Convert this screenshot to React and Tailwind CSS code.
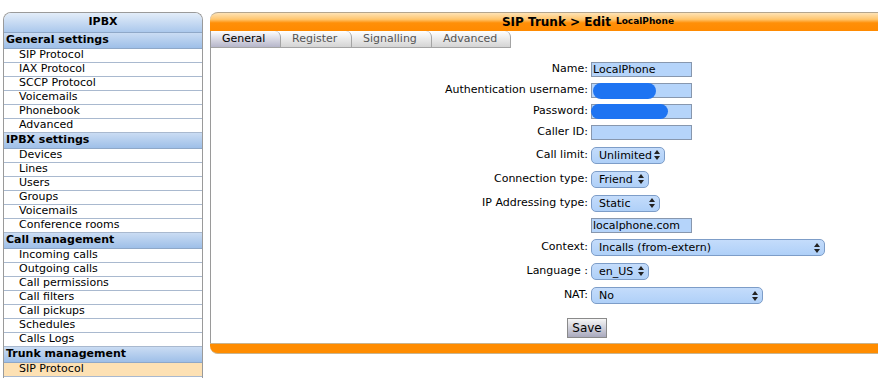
import React from 'react';

const MENU = [
  { title: 'General settings', items: ['SIP Protocol', 'IAX Protocol', 'SCCP Protocol', 'Voicemails', 'Phonebook', 'Advanced'] },
  { title: 'IPBX settings', items: ['Devices', 'Lines', 'Users', 'Groups', 'Voicemails', 'Conference rooms'] },
  { title: 'Call management', items: ['Incoming calls', 'Outgoing calls', 'Call permissions', 'Call filters', 'Call pickups', 'Schedules', 'Calls Logs'] },
  { title: 'Trunk management', items: ['SIP Protocol', ''], active: 0 },
];

const TABS = [
  { label: 'General', w: 'w-[70px]', on: true },
  { label: 'Register', w: 'w-[71px]' },
  { label: 'Signalling', w: 'w-[80px]' },
  { label: 'Advanced', w: 'w-[79px]' },
];

function Arrows() {
  return (
    <svg width="6" height="10" viewBox="0 0 6 10" className="shrink-0">
      <polygon points="0,4 3,0 6,4" fill="#222" />
      <polygon points="0,6 3,10 6,6" fill="#222" />
    </svg>
  );
}

function Sel({ w, v }) {
  return (
    <div className={`flex h-[17px] items-center justify-between rounded-[5px] border border-[#7d9dc8] bg-[linear-gradient(to_bottom,#c4dcfb,#afd0f8)] pl-[7px] pr-[4px] leading-none ${w}`}>
      <span>{v}</span>
      <Arrows />
    </div>
  );
}

function Txt({ v, children }) {
  return (
    <div className="relative h-[15px] w-[101px] border border-[#8797ae] bg-[#b5d4fa] pl-[1px] leading-[13px]">
      {v}
      {children}
    </div>
  );
}

function Row({ label, h, children }) {
  return (
    <div className={`flex items-center ${h}`}>
      <div className="w-[380px] pr-[3px] text-right">{label}</div>
      {children}
    </div>
  );
}

export default function App() {
  return (
    <div className="flex h-[378px] w-[878px] overflow-hidden bg-white pt-[12px] font-['DejaVu_Sans','Verdana',sans-serif] text-[11px] text-black">

      {/* SIDEBAR */}
      <div className="ml-[3px] w-[200px] shrink-0 rounded-t-[8px] border-x border-t border-[#9a9a9a]">
        <div className="flex h-[20px] items-center justify-center rounded-t-[7px] border-b border-[#8fa8c8] bg-[linear-gradient(to_bottom,#e3edf9,#abc8ec)] font-bold">
          IPBX
        </div>
        {MENU.map((sec, i) => (
          <div key={i}>
            <div className="flex h-[16px] items-center border-b border-[#8fa8c8] bg-[linear-gradient(to_bottom,#cadcf3,#9ebfe8)] pl-[2px] font-bold">
              {sec.title}
            </div>
            {sec.items.map((it, j) => (
              <div key={j}
                className={`flex h-[14px] items-center border-b border-[#a9b9cf] pl-[15px] ${sec.active === j ? 'bg-[#fde1b4]' : 'bg-white'}`}>
                {it}
              </div>
            ))}
          </div>
        ))}
      </div>

      {/* MAIN */}
      <div className="ml-[7px] flex w-[700px] shrink-0 flex-col">
        <div className="flex h-[19px] items-center justify-center gap-[5px] rounded-tl-[8px] border-t border-[#b3a58e] bg-[linear-gradient(to_bottom,#fee3b6_0%,#ffc66e_35%,#ff8f08_55%,#ff8a00_100%)] pl-[56px]">
          <span className="text-[12px] font-bold">SIP Trunk &gt; Edit</span>
          <span className="text-[9px] font-bold">LocalPhone</span>
        </div>

        <div className="flex flex-col border-l border-[#9a9a9a]">
          <div className="flex h-[17px]">
            {TABS.map((t, i) => (
              <div key={i}
                className={`flex items-center rounded-tr-[6px] border-r border-b border-[#a4a4a4] pl-[11px] ${t.w} ${t.on ? 'bg-[linear-gradient(to_bottom,#fdfdfd,#b6b6ca)] text-black' : 'bg-[linear-gradient(to_bottom,#ffffff,#d4d4d4)] text-[#555]'}`}>
                {t.label}
              </div>
            ))}
          </div>

          <div className="flex h-[295px] flex-col pt-[11px]">
            <Row label="Name:" h="h-[21px]"><Txt v="LocalPhone" /></Row>
            <Row label="Authentication username:" h="h-[21px]">
              <Txt v="">
                <div className="absolute left-[1px] top-[-1px] h-[16px] w-[63px] rounded-full bg-[#1e74f2]" />
              </Txt>
            </Row>
            <Row label="Password:" h="h-[21px]">
              <Txt v="">
                <div className="absolute left-[-1px] top-[-1px] h-[15px] w-[77px] rounded-full bg-[#1e74f2]" />
              </Txt>
            </Row>
            <Row label="Caller ID:" h="h-[21px]"><Txt v="" /></Row>
            <Row label="Call limit:" h="h-[24px]"><Sel w="w-[74px]" v="Unlimited" /></Row>
            <Row label="Connection type:" h="h-[24px]"><Sel w="w-[58px]" v="Friend" /></Row>
            <Row label="IP Addressing type:" h="h-[24px]"><Sel w="w-[69px]" v="Static" /></Row>
            <Row label="" h="h-[21px]"><Txt v="localphone.com" /></Row>
            <Row label="Context:" h="h-[23px]"><Sel w="w-[234px]" v="Incalls (from-extern)" /></Row>
            <Row label="Language :" h="h-[24px]"><Sel w="w-[58px]" v="en_US" /></Row>
            <Row label="NAT:" h="h-[25px]"><Sel w="w-[172px]" v="No" /></Row>
            <div className="mt-[10px] flex pl-[356px]">
              <button className="flex h-[20px] w-[40px] items-center justify-center border border-[#8a8a8a] bg-[linear-gradient(to_bottom,#f6f6f6,#a9a9bd)] text-[12px]">
                Save
              </button>
            </div>
          </div>
        </div>

        <div className="h-[11px] rounded-bl-[8px] border-y border-[#c9b48e] bg-[#ff8c00]" />
      </div>
    </div>
  );
}
